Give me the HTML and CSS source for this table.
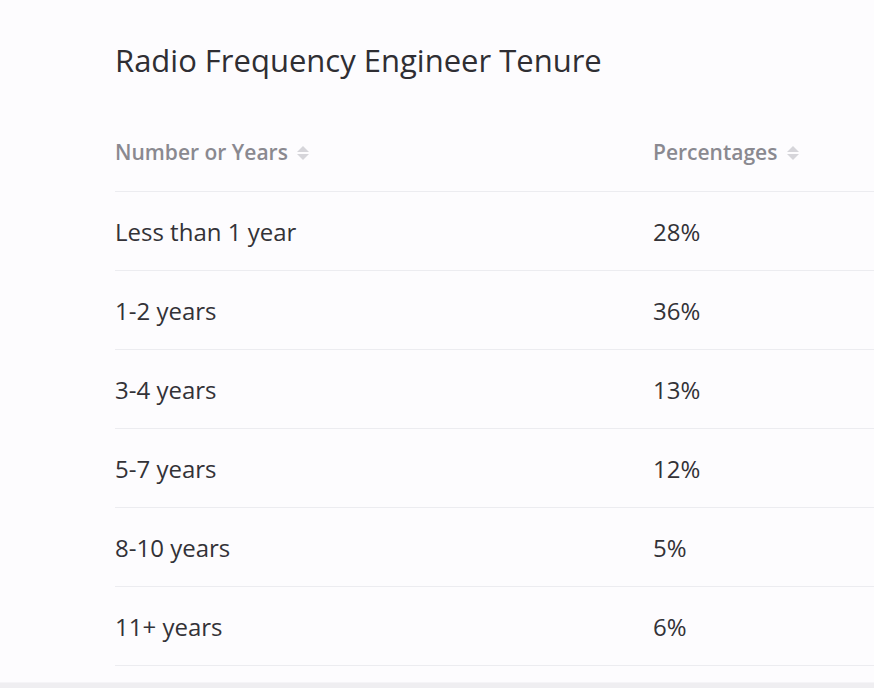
FILE: index.html
```html
<!DOCTYPE html>
<html>
<head>
<meta charset="utf-8">
<link rel="stylesheet" href="styles.css">
</head>
<body>
<div class="page">
  <h2 class="title">Radio Frequency Engineer Tenure</h2>
  <table class="tenure">
    <thead>
      <tr>
        <th class="col-years">Number or Years <span class="sort"><span class="up"></span><span class="down"></span></span></th>
        <th>Percentages <span class="sort"><span class="up"></span><span class="down"></span></span></th>
      </tr>
    </thead>
    <tbody>
      <tr><td>Less than 1 year</td><td>28%</td></tr>
      <tr><td>1-2 years</td><td>36%</td></tr>
      <tr><td>3-4 years</td><td>13%</td></tr>
      <tr><td>5-7 years</td><td>12%</td></tr>
      <tr><td>8-10 years</td><td>5%</td></tr>
      <tr><td>11+ years</td><td>6%</td></tr>
    </tbody>
  </table>
</div>
<div class="footer-strip"></div>
</body>
</html>
```
FILE: styles.css
```css
html, body {
  margin: 0;
  padding: 0;
  height: 100%;
  overflow: hidden;
  background: #fdfcfe;
}
body {
  font-family: "Open Sans", "Liberation Sans", sans-serif;
  color: #333237;
  position: relative;
}
.page {
  padding: 38px 0 0 115px;
}
.title {
  margin: 0;
  font-size: 31px;
  line-height: 44px;
  font-weight: 500;
  color: #2f2e33;
  letter-spacing: 0;
}
.tenure {
  margin-top: 31px;
  width: 100%;
  border-collapse: collapse;
}
.tenure th {
  text-align: left;
  font-size: 21px;
  font-weight: 600;
  color: #8a8990;
  height: 78px;
  padding: 0;
  border-bottom: 1px solid #ececf0;
  vertical-align: middle;
}
.tenure .col-years {
  width: 538px;
}
.tenure td {
  font-size: 24px;
  font-weight: 400;
  color: #333237;
  height: 78px;
  padding: 0;
  border-bottom: 1px solid #ececf0;
  vertical-align: middle;
}
.sort {
  display: inline-flex;
  flex-direction: column;
  gap: 2px;
  vertical-align: middle;
  margin-left: 4px;
  position: relative;
  top: -1px;
}
.sort .up {
  width: 0;
  height: 0;
  border-left: 6px solid transparent;
  border-right: 6px solid transparent;
  border-bottom: 6px solid #d6d5da;
}
.sort .down {
  width: 0;
  height: 0;
  border-left: 6px solid transparent;
  border-right: 6px solid transparent;
  border-top: 6px solid #d6d5da;
}
.footer-strip {
  position: absolute;
  left: 0;
  right: 0;
  bottom: 0;
  height: 5px;
  background: #efeef1;
  border-top: 1px solid #f5f4f7;
}
```
